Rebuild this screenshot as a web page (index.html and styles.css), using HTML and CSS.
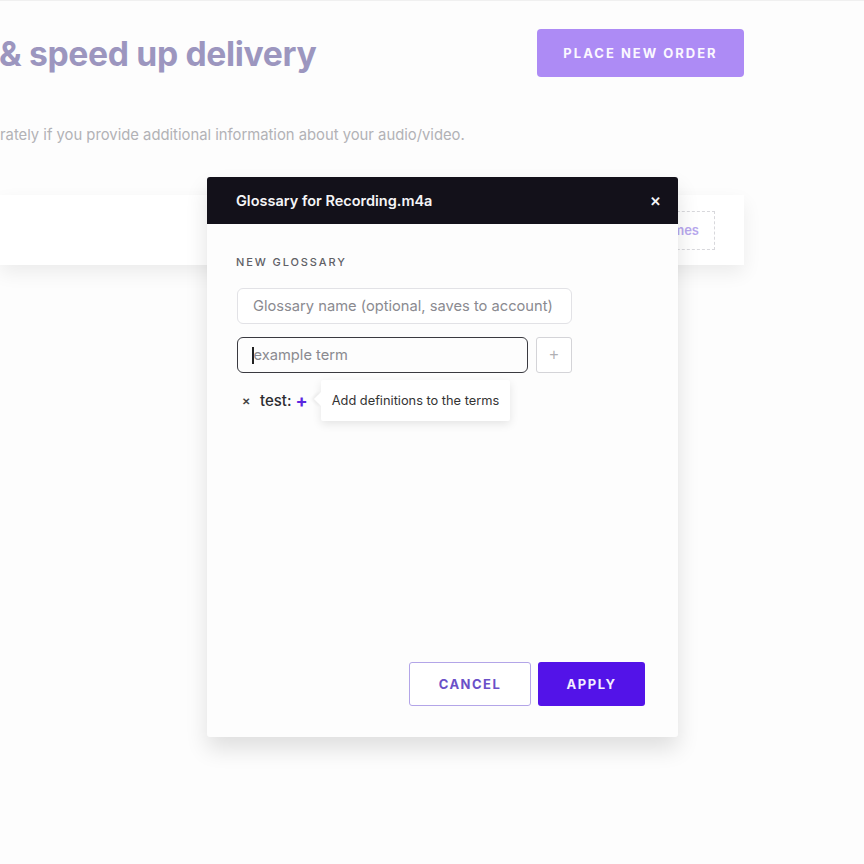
FILE: index.html
```html
<!DOCTYPE html>
<html lang="en">
<head>
  <meta charset="UTF-8">
  <title>Glossary</title>
  <link rel="stylesheet" href="styles.css">
</head>
<body>

  <div class="page">
    <div class="top">
      <h1 class="title">&amp; speed up delivery</h1>
      <button class="order-btn">PLACE NEW ORDER</button>
    </div>
    <p class="subtitle">rately if you provide additional information about your audio/video.</p>
    <div class="card">
      <div class="dashed">Speaker names</div>
    </div>
  </div>

  <div class="modal">
    <div class="modal-head">
      <span>Glossary for Recording.m4a</span>
      <span class="close">&#x2715;</span>
    </div>
    <div class="modal-body">
      <div class="label">NEW GLOSSARY</div>
      <input class="field name" type="text" placeholder="Glossary name (optional, saves to account)">
      <div class="term-row">
        <div class="field term"><span class="caret"></span>example term</div>
        <button class="add-btn">+</button>
      </div>
      <div class="terms">
        <span class="remove">&#x2715;</span>
        <span class="word">test:</span>
        <span class="plus">+</span>
        <div class="tip">Add definitions to the terms</div>
      </div>
      <div class="footer">
        <button class="cancel">CANCEL</button>
        <button class="apply">APPLY</button>
      </div>
    </div>
  </div>

</body>
</html>
```

FILE: styles.css
```css
* {
  margin: 0;
  padding: 0;
  box-sizing: border-box;
}

body {
  background: #fdfdfd;
  height: 100vh;
  overflow: hidden;
  position: relative;
  font-family: Inter, 'Noto Sans', sans-serif;
  border-top: 1px solid #f0f0f0;
}

.page {
  width: 744px;
  padding-top: 28px;
}

.top {
  display: flex;
  justify-content: space-between;
  align-items: center;
}

.title {
  font-size: 33.7px;
  font-weight: 700;
  color: #9c96bf;
  letter-spacing: -0.35px;
  margin-left: -1px;
}

.order-btn {
  width: 207px;
  height: 48px;
  border: none;
  border-radius: 4px;
  background: #ad8bf5;
  color: #fbf8ff;
  font-family: inherit;
  font-size: 13px;
  font-weight: 700;
  letter-spacing: 2px;
}

.subtitle {
  margin-top: 49px;
  font-size: 14.8px;
  color: #b2b2b6;
}

.card {
  margin-top: 51px;
  height: 70px;
  background: #fff;
  box-shadow: 0 8px 18px rgba(0, 0, 0, 0.07);
  display: flex;
  justify-content: flex-end;
  align-items: center;
  padding-right: 29px;
}

.dashed {
  height: 39px;
  padding: 0 15px 0 40px;
  border: 1px dashed #d8d8dc;
  display: flex;
  align-items: center;
  font-size: 13px;
  font-weight: 600;
  color: #b8a8ee;
}

.modal {
  position: absolute;
  left: 207px;
  top: 176px;
  width: 471px;
  height: 560px;
  background: #fdfdfd;
  border-radius: 3px;
  box-shadow: 0 12px 22px rgba(0, 0, 0, 0.12);
  display: flex;
  flex-direction: column;
  overflow: hidden;
}

.modal-head {
  height: 47px;
  background: #13111a;
  color: #f5f5f7;
  display: flex;
  justify-content: space-between;
  align-items: center;
  padding: 0 17px 0 29px;
  font-size: 14.5px;
  font-weight: 600;
}

.close {
  font-size: 13px;
  font-weight: 700;
}

.modal-body {
  flex: 1;
  display: flex;
  flex-direction: column;
  padding: 31px 33px 31px 29px;
}

.label {
  font-size: 11px;
  font-weight: 500;
  letter-spacing: 1.9px;
  color: #606066;
  margin-bottom: 19px;
}

.field {
  height: 36px;
  border-radius: 6px;
  font-family: inherit;
  font-size: 14.7px;
  color: #333;
  padding: 0 15px;
}

.name {
  width: 335px;
  margin-left: 1px;
  border: 1px solid #e2e2e6;
  background: #fff;
}

.name::placeholder {
  color: #8a8a90;
}

.term-row {
  display: flex;
  gap: 8px;
  margin-top: 13px;
  margin-left: 1px;
}

.term {
  width: 291px;
  border: 1.5px solid #3a3a40;
  display: flex;
  align-items: center;
  color: #8a8a90;
}

.caret {
  width: 1.5px;
  height: 17px;
  background: #222;
  margin-left: -1px;
}

.add-btn {
  width: 36px;
  height: 36px;
  border: 1px solid #d4d4d8;
  border-radius: 3px;
  background: #fff;
  color: #b0b0b4;
  font-size: 16px;
  font-weight: 300;
}

.terms {
  display: flex;
  align-items: center;
  margin-top: 7px;
  margin-left: 6px;
}

.remove {
  font-size: 10px;
  font-weight: 700;
  color: #444;
  margin-right: 10px;
}

.word {
  font-size: 15px;
  font-weight: 500;
  color: #2c2c30;
}

.plus {
  color: #5a27e0;
  font-size: 18px;
  font-weight: 700;
  margin-left: 4px;
}

.tip {
  position: relative;
  margin-left: 13px;
  height: 41px;
  padding: 0 11px;
  display: flex;
  align-items: center;
  background: #fff;
  font-size: 12.8px;
  color: #333;
  box-shadow: 0 3px 10px rgba(0, 0, 0, 0.1);
  border-radius: 2px;
}

.tip::before {
  content: '';
  position: absolute;
  left: -5px;
  top: 14px;
  width: 10px;
  height: 10px;
  background: #fff;
  transform: rotate(45deg);
  box-shadow: -2px 2px 3px rgba(0, 0, 0, 0.06);
}

.footer {
  margin-top: auto;
  display: flex;
  justify-content: flex-end;
  gap: 7px;
}

.cancel,
.apply {
  height: 44px;
  border-radius: 3px;
  font-family: inherit;
  font-size: 13px;
  font-weight: 700;
  letter-spacing: 1.5px;
}

.cancel {
  width: 122px;
  background: #fff;
  border: 1px solid #b3a5e8;
  color: #6a50c8;
}

.apply {
  width: 107px;
  background: #5313e8;
  border: none;
  color: #f4efff;
}
```
